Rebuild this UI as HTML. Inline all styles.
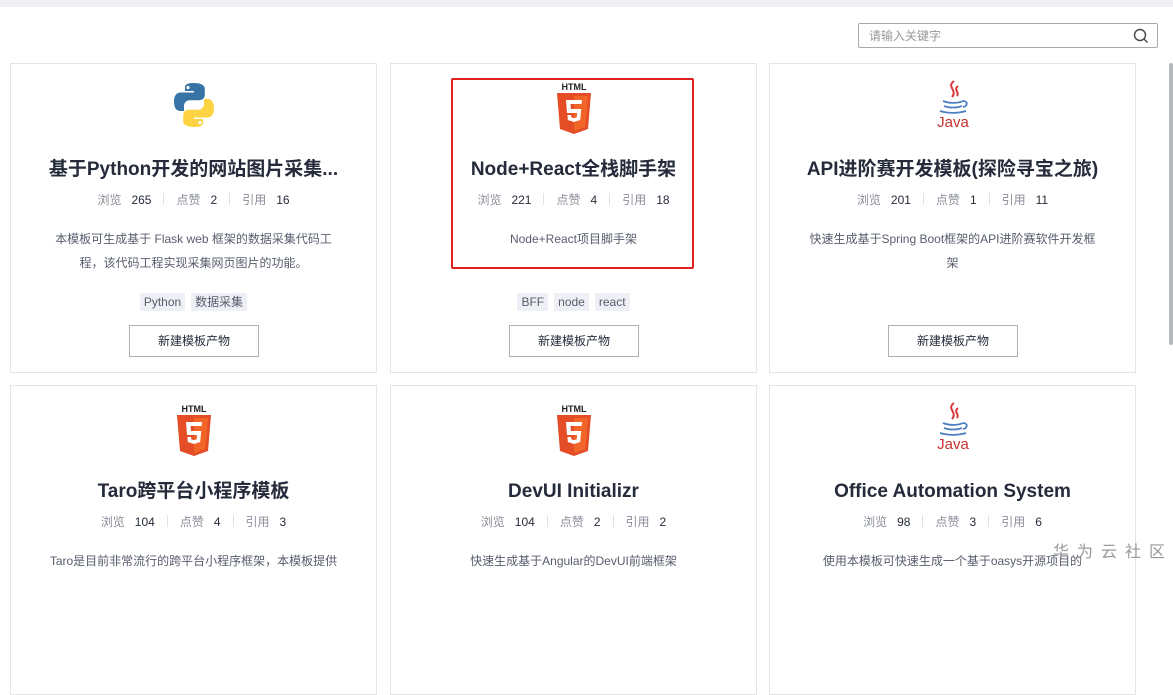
<!DOCTYPE html><html><head><meta charset="utf-8"><style>
*{margin:0;padding:0;box-sizing:border-box}
body{width:1173px;height:574px;overflow:hidden;background:#fff;font-family:"Liberation Sans","Noto Sans CJK SC",sans-serif;position:relative}
.top{position:absolute;left:0;top:0;width:1173px;height:7px;background:#eef0f4}
.search{position:absolute;left:858px;top:23px;width:300px;height:25px;border:1px solid #aaa;border-radius:2px;font-size:12px;color:#999;padding:5px 10px;line-height:14px}
.search svg{position:absolute;right:8px;top:4px}
.sb{position:absolute;left:1169px;top:63px;width:4px;height:282px;background:#b5b8bc;border-radius:2px}
.card{position:absolute;width:367px;height:310px;border:1px solid #e3e5e8;background:#fff;text-align:center}
.ic{position:absolute;left:0;right:0;top:16px;height:50px;display:flex;justify-content:center}
.t{position:absolute;left:0;right:0;top:93px;font-size:19px;font-weight:bold;color:#252b3a;line-height:26px}
.s{position:absolute;left:0;right:0;top:128px;font-size:12px;color:#252b3a;line-height:16px}
.s i{font-style:normal;color:#8a8e99;margin-right:10px}
.s b{font-weight:normal;display:inline-block;width:1px;height:12px;background:#dfe1e6;margin:0 12px;vertical-align:-1px}
.d{position:absolute;left:34px;right:34px;top:163px;font-size:12px;color:#575d6c;line-height:24px}
.tg{position:absolute;left:0;right:0;top:229px;font-size:12px;color:#575d6c}
.tg span{display:inline-block;background:#eef0f5;padding:2px 4px;margin:0 3px;line-height:14px}
.bt{position:absolute;left:118px;top:261px;width:130px;height:32px;border:1px solid #adb0b8;font-size:12px;color:#252b3a;line-height:30px}
.red{position:absolute;left:451px;top:78px;width:243px;height:191px;border:2px solid #e02020;border-radius:2px}
.wm{position:absolute;left:1053px;top:538px;font-size:16px;color:#999;letter-spacing:8px}
</style></head><body>
<div class="top"></div>
<div class="search">请输入关键字<svg width="16" height="16" viewBox="0 0 16 16"><circle cx="7" cy="7" r="5.5" fill="none" stroke="#444" stroke-width="1.4"/><path d="M11 11l3.5 3.5" stroke="#444" stroke-width="1.4"/></svg></div>
<div class="sb"></div>

<div class="card" style="left:10px;top:63px">
<div class="ic"><svg width="48" height="48" viewBox="0 0 48 48" style="margin-top:1px"><path d="M23.5 2c-9 0-8.5 4-8.5 4v4h9v1.5H11S4 10.7 4 20.5s6 9.5 6 9.5h4v-4.8s-.2-6 6-6h9s5.8.1 5.8-5.6V7.8S35.6 2 23.5 2z" fill="#3773a5"/><circle cx="18" cy="6.5" r="1.6" fill="#fff"/><path d="M24.5 46c9 0 8.5-4 8.5-4v-4h-9v-1.5h13s7 .8 7-9-6-9.5-6-9.5h-4v4.8s.2 6-6 6h-9s-5.8-.1-5.8 5.6v5.8S12.4 46 24.5 46z" fill="#fdd343"/><circle cx="30" cy="41.5" r="1.6" fill="#fff"/></svg></div>
<div class="t">基于Python开发的网站图片采集...</div>
<div class="s"><i>浏览</i>265<b></b><i>点赞</i>2<b></b><i>引用</i>16</div>
<div class="d">本模板可生成基于 Flask web 框架的数据采集代码工程，该代码工程实现采集网页图片的功能。</div>
<div class="tg"><span>Python</span><span>数据采集</span></div>
<div class="bt">新建模板产物</div>
</div>

<div class="card" style="left:390px;top:63px">
<div class="ic"><svg width="40" height="56" viewBox="0 0 40 56"><text x="20" y="10" font-size="9" font-weight="bold" text-anchor="middle" font-family="Liberation Sans" fill="#222">HTML</text><path d="M3 13h34l-3 36-14 5-14-5z" fill="#e44d26"/><path d="M20 16h14l-2.6 31L20 51z" fill="#f16529"/><path d="M12 20h16l-.4 4H16.5l.4 5h10.3l-1 11-6.2 2-6.2-2-.3-5h3.6l.2 2.3 2.7.8 2.8-.8.3-4.3H13z" fill="#fff"/></svg></div>
<div class="t">Node+React全栈脚手架</div>
<div class="s"><i>浏览</i>221<b></b><i>点赞</i>4<b></b><i>引用</i>18</div>
<div class="d">Node+React项目脚手架</div>
<div class="tg"><span>BFF</span><span>node</span><span>react</span></div>
<div class="bt">新建模板产物</div>
</div>

<div class="card" style="left:769px;top:63px">
<div class="ic"><svg width="36" height="50" viewBox="0 0 36 50"><path d="M19 1c-8 6 4 9-2 16M23 6c-5 4 2 6-1 10" stroke="#d9383a" stroke-width="2" fill="none"/><path d="M8 21c6 2.5 15 2.5 20 0M9 26c5 2 13 2 18 0M5 31c8 2.5 18 2.5 26 0M28 21c5 0 5 5 0 6" stroke="#4d80c0" stroke-width="1.8" fill="none"/><text x="18" y="47" font-size="15" text-anchor="middle" font-family="Liberation Sans" fill="#c7302f">Java</text></svg></div>
<div class="t">API进阶赛开发模板(探险寻宝之旅)</div>
<div class="s"><i>浏览</i>201<b></b><i>点赞</i>1<b></b><i>引用</i>11</div>
<div class="d">快速生成基于Spring Boot框架的API进阶赛软件开发框架</div>
<div class="bt">新建模板产物</div>
</div>

<div class="card" style="left:10px;top:385px">
<div class="ic"><svg width="40" height="56" viewBox="0 0 40 56"><text x="20" y="10" font-size="9" font-weight="bold" text-anchor="middle" font-family="Liberation Sans" fill="#222">HTML</text><path d="M3 13h34l-3 36-14 5-14-5z" fill="#e44d26"/><path d="M20 16h14l-2.6 31L20 51z" fill="#f16529"/><path d="M12 20h16l-.4 4H16.5l.4 5h10.3l-1 11-6.2 2-6.2-2-.3-5h3.6l.2 2.3 2.7.8 2.8-.8.3-4.3H13z" fill="#fff"/></svg></div>
<div class="t">Taro跨平台小程序模板</div>
<div class="s"><i>浏览</i>104<b></b><i>点赞</i>4<b></b><i>引用</i>3</div>
<div class="d" style="left:28px;right:28px">Taro是目前非常流行的跨平台小程序框架，本模板提供</div>
</div>

<div class="card" style="left:390px;top:385px">
<div class="ic"><svg width="40" height="56" viewBox="0 0 40 56"><text x="20" y="10" font-size="9" font-weight="bold" text-anchor="middle" font-family="Liberation Sans" fill="#222">HTML</text><path d="M3 13h34l-3 36-14 5-14-5z" fill="#e44d26"/><path d="M20 16h14l-2.6 31L20 51z" fill="#f16529"/><path d="M12 20h16l-.4 4H16.5l.4 5h10.3l-1 11-6.2 2-6.2-2-.3-5h3.6l.2 2.3 2.7.8 2.8-.8.3-4.3H13z" fill="#fff"/></svg></div>
<div class="t">DevUI Initializr</div>
<div class="s"><i>浏览</i>104<b></b><i>点赞</i>2<b></b><i>引用</i>2</div>
<div class="d">快速生成基于Angular的DevUI前端框架</div>
</div>

<div class="card" style="left:769px;top:385px">
<div class="ic"><svg width="36" height="50" viewBox="0 0 36 50"><path d="M19 1c-8 6 4 9-2 16M23 6c-5 4 2 6-1 10" stroke="#d9383a" stroke-width="2" fill="none"/><path d="M8 21c6 2.5 15 2.5 20 0M9 26c5 2 13 2 18 0M5 31c8 2.5 18 2.5 26 0M28 21c5 0 5 5 0 6" stroke="#4d80c0" stroke-width="1.8" fill="none"/><text x="18" y="47" font-size="15" text-anchor="middle" font-family="Liberation Sans" fill="#c7302f">Java</text></svg></div>
<div class="t">Office Automation System</div>
<div class="s"><i>浏览</i>98<b></b><i>点赞</i>3<b></b><i>引用</i>6</div>
<div class="d">使用本模板可快速生成一个基于oasys开源项目的</div>
</div>

<div class="red"></div>
<div class="wm">华为云社区</div>
</body></html>
